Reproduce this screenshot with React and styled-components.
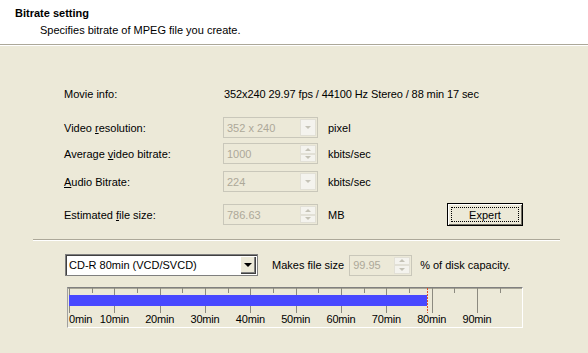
import React from 'react';
import styled, { createGlobalStyle } from 'styled-components';

const GlobalStyle = createGlobalStyle`
  html, body {
    margin: 0;
    padding: 0;
  }
  body {
    width: 588px;
    height: 353px;
    overflow: hidden;
    background: #ece9d8;
    font-family: "Liberation Sans", Arial, sans-serif;
    font-size: 11px;
    color: #000;
  }
`;

const Page = styled.div`
  width: 588px;
  height: 353px;
  background: #ece9d8;
`;

const Header = styled.header`
  box-sizing: border-box;
  height: 45px;
  padding: 6px 0 0 15px;
  background: #fff;
  border-bottom: 1px solid #aca899;
`;

const Title = styled.div`
  font-weight: bold;
  line-height: 14px;
`;

const Subtitle = styled.div`
  margin: 3px 0 0 25px;
  line-height: 14px;
`;

const Body = styled.main`
  border-top: 1px solid #fff;
  padding-top: 37px;
`;

const Form = styled.div`
  display: flex;
  flex-direction: column;
  margin-left: 64px;
  width: 459px;
`;

const Row = styled.div`
  display: grid;
  grid-template-columns: 159px 95px 1fr auto;
  align-items: center;
  height: 21px;
  margin-top: ${p => p.$top || 0}px;
`;

const Label = styled.span`
  white-space: nowrap;
`;

const Value = styled.span`
  grid-column: 2 / -1;
  padding-left: 1px;
  white-space: nowrap;
  letter-spacing: -0.1px;
`;

const Unit = styled.span`
  padding-left: 10px;
  white-space: nowrap;
`;

const Key = styled.span`
  text-decoration: underline;
`;

const FieldBox = styled.div`
  box-sizing: border-box;
  display: flex;
  align-items: stretch;
  width: ${p => p.$w}px;
  height: ${p => p.$h || 21}px;
  padding: 1px;
  border: 1px solid ${p => (p.$disabled ? '#c9c7ba' : '#7f7f7f')};
  background: ${p => (p.$disabled ? '#ece9d8' : '#fff')};
  color: ${p => (p.$disabled ? '#aca899' : '#000')};
  ${p => !p.$disabled && 'box-shadow: inset 1px 1px #404040;'}
`;

const FieldText = styled.span`
  flex: 1;
  display: flex;
  align-items: center;
  padding-left: 2px;
  white-space: nowrap;
  overflow: hidden;
`;

const Arrow = styled.span`
  width: 0;
  height: 0;
  border-left: ${p => p.$size || 3}px solid transparent;
  border-right: ${p => p.$size || 3}px solid transparent;
  ${p => (p.$up ? 'border-bottom' : 'border-top')}: ${p => p.$size || 3}px solid
    ${p => (p.$disabled ? '#c4c2b6' : '#000')};
`;

const DropButton = styled.div`
  box-sizing: border-box;
  width: 16px;
  display: flex;
  align-items: center;
  justify-content: center;
  background: ${p => (p.$disabled ? '#f4f3ee' : '#ece9d8')};
  border: ${p => (p.$disabled ? '1px solid #e2e0d6' : 'none')};
  ${p =>
    !p.$disabled &&
    'box-shadow: inset 1px 1px #fff, inset -1px -1px #404040, inset -2px -2px #808080;'}
`;

const SpinColumn = styled.div`
  width: 16px;
  display: flex;
  flex-direction: column;
`;

const SpinHalf = styled.div`
  box-sizing: border-box;
  flex: 1;
  display: flex;
  align-items: center;
  justify-content: center;
  background: #f4f3ee;
  border: 1px solid #e2e0d6;
`;

const ExpertButton = styled.button`
  position: relative;
  box-sizing: border-box;
  width: 76px;
  height: 23px;
  padding: 0;
  border: 1px solid #000;
  background: #ece9d8;
  box-shadow: inset 1px 1px #fff, inset -1px -1px #716f64;
  font: inherit;
  color: #000;

  &::after {
    content: '';
    position: absolute;
    inset: 3px;
    border: 1px dotted #000;
  }
`;

const Separator = styled.div`
  margin: 15px 0 0 33px;
  width: 527px;
  border-top: 1px solid #aca899;
  border-bottom: 1px solid #fff;
`;

const DiskRow = styled.div`
  display: flex;
  align-items: center;
  margin: 13px 0 0 65px;
  height: 22px;
`;

const Text = styled.span`
  margin-left: ${p => p.$ml || 0}px;
  white-space: nowrap;
`;

const Scale = styled.div`
  position: relative;
  box-sizing: border-box;
  margin: 11px 0 0 67px;
  width: 456px;
  height: 41px;
  border-top: 1px solid #808080;
  border-left: 1px solid #a0a0a0;
  border-right: 1px solid #fff;
  border-bottom: 1px solid #fff;
  box-shadow: inset 0 1px #a8a698;
`;

const Ticks = styled.svg`
  position: absolute;
  left: 0;
  top: 0;
`;

const Bar = styled.div`
  position: absolute;
  left: 1px;
  top: 7px;
  height: 11px;
  background: #4848ff;
`;

const ScaleLabel = styled.span`
  position: absolute;
  top: 24px;
  line-height: 14px;
  white-space: nowrap;
  letter-spacing: -0.2px;
  transform: ${p => (p.$first ? 'none' : 'translateX(-50%)')};
`;

const DisabledCombo = ({ text, w = 95 }) => (
  <FieldBox $w={w} $disabled>
    <FieldText>{text}</FieldText>
    <DropButton $disabled>
      <Arrow $disabled />
    </DropButton>
  </FieldBox>
);

const DisabledSpin = ({ text, w = 95 }) => (
  <FieldBox $w={w} $disabled>
    <FieldText>{text}</FieldText>
    <SpinColumn>
      <SpinHalf>
        <Arrow $up $disabled $size={3} />
      </SpinHalf>
      <SpinHalf>
        <Arrow $disabled $size={3} />
      </SpinHalf>
    </SpinColumn>
  </FieldBox>
);

const minor = 22.667;
const barWidth = 358;
const marks = [0, 10, 20, 30, 40, 50, 60, 70, 80, 90];

const TimeScale = () => (
  <Scale>
    <Ticks width="454" height="39">
      {Array.from({ length: 20 }, (_, i) => {
        const x = Math.round(1 + i * minor) + 0.5;
        return (
          <line
            key={i}
            x1={x}
            x2={x}
            y1="0"
            y2={i % 2 === 0 ? 25 : 5}
            stroke="#8c8a80"
          />
        );
      })}
    </Ticks>
    <Bar style={{ width: barWidth }} />
    <Ticks width="454" height="39">
      <line
        x1={barWidth + 1.5}
        x2={barWidth + 1.5}
        y1="0"
        y2="25"
        stroke="#e0502a"
        strokeDasharray="2 1"
      />
    </Ticks>
    {marks.map((m, i) => (
      <ScaleLabel
        key={m}
        $first={i === 0}
        style={{ left: i === 0 ? 1 : 1 + i * minor * 2 }}
      >
        {m}min
      </ScaleLabel>
    ))}
  </Scale>
);

const App = () => (
  <Page>
    <GlobalStyle />
    <Header>
      <Title>Bitrate setting</Title>
      <Subtitle>Specifies bitrate of MPEG file you create.</Subtitle>
    </Header>
    <Body>
      <Form>
        <Row>
          <Label>Movie info:</Label>
          <Value>352x240 29.97 fps / 44100 Hz Stereo / 88 min 17 sec</Value>
        </Row>
        <Row $top={13}>
          <Label>
            Video <Key>r</Key>esolution:
          </Label>
          <DisabledCombo text="352 x 240" />
          <Unit>pixel</Unit>
        </Row>
        <Row $top={5}>
          <Label>
            Average <Key>v</Key>ideo bitrate:
          </Label>
          <DisabledSpin text="1000" />
          <Unit>kbits/sec</Unit>
        </Row>
        <Row $top={7}>
          <Label>
            <Key>A</Key>udio Bitrate:
          </Label>
          <DisabledCombo text="224" />
          <Unit>kbits/sec</Unit>
        </Row>
        <Row $top={11}>
          <Label>
            Estimated <Key>f</Key>ile size:
          </Label>
          <DisabledSpin text="786.63" />
          <Unit>MB</Unit>
          <ExpertButton>Expert</ExpertButton>
        </Row>
      </Form>
      <Separator />
      <DiskRow>
        <FieldBox $w={193} $h={22}>
          <FieldText>CD-R 80min (VCD/SVCD)</FieldText>
          <DropButton>
            <Arrow $size={4} />
          </DropButton>
        </FieldBox>
        <Text $ml={14}>Makes file size</Text>
        <Text $ml={5}>
          <DisabledSpin text="99.95" w={63} />
        </Text>
        <Text $ml={8}>% of disk capacity.</Text>
      </DiskRow>
      <TimeScale />
    </Body>
  </Page>
);

export default App;
